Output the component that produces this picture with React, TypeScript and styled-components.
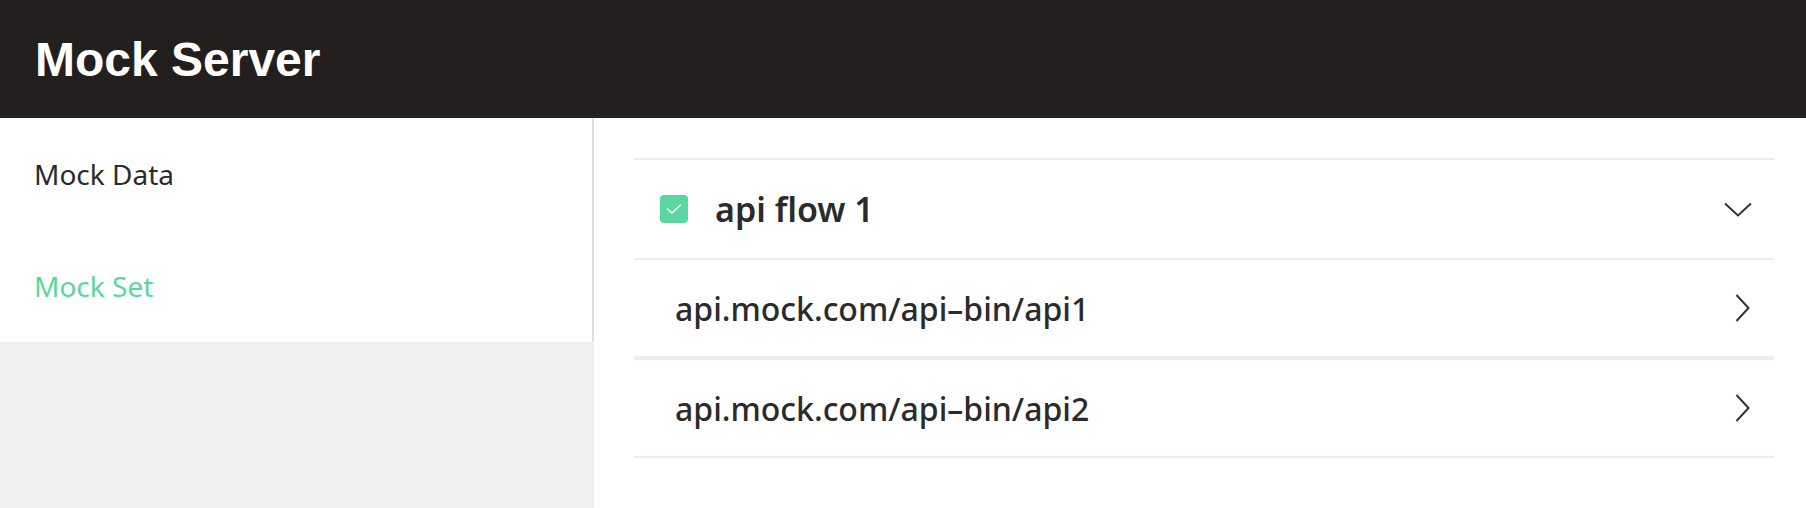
import React from "react";
import styled, { createGlobalStyle } from "styled-components";

const GlobalStyle = createGlobalStyle`
  html, body { margin: 0; padding: 0; background: #ffffff; }
  body { font-family: "Noto Sans", "Liberation Sans", sans-serif; color: #333333; }
  * { box-sizing: border-box; }
`;

const Page = styled.div`
  display: flex;
  flex-direction: column;
  width: 1806px;
  height: 508px;
  overflow: hidden;
`;

const TopBar = styled.header`
  display: flex;
  align-items: center;
  height: 118px;
  padding-left: 35px;
  background: #231f1e;
  flex-shrink: 0;
`;

const Title = styled.h1`
  margin: 0;
  font-family: "Liberation Sans", Arial, sans-serif;
  font-weight: 700;
  font-size: 48px;
  color: #ffffff;
`;

const Body = styled.div`
  display: flex;
  flex: 1;
  min-height: 0;
`;

const Sidebar = styled.aside`
  width: 594px;
  flex-shrink: 0;
  background: #f0f0f0;
`;

const Menu = styled.nav`
  display: flex;
  flex-direction: column;
  background: #ffffff;
  border-right: 2px solid #dedede;
`;

const MenuItem = styled.div<{ $active?: boolean }>`
  display: flex;
  align-items: center;
  height: 112px;
  padding-left: 34px;
  font-size: 28px;
  color: ${(p) => (p.$active ? "#5ad7a1" : "#2b2b2b")};
`;

const Content = styled.main`
  flex: 1;
  padding: 40px 32px 0 40px;
`;

const GroupHeader = styled.div`
  display: flex;
  align-items: center;
  height: 100px;
  padding: 0 22px 0 26px;
  border-top: 2px solid #eaedf3;
`;

const Check = styled.span`
  display: flex;
  align-items: center;
  justify-content: center;
  width: 28px;
  height: 28px;
  border-radius: 4px;
  background: #5ad7a1;
  flex-shrink: 0;
`;

const GroupTitle = styled.span`
  flex: 1;
  margin-left: 27px;
  font-size: 34px;
  font-weight: 600;
  color: #2b2b2b;
`;

const ApiRow = styled.div`
  display: flex;
  align-items: center;
  height: 100px;
  padding: 0 24px 0 41px;
  border-top: 2px solid #eaedf3;
  border-bottom: 2px solid #eaedf3;
`;

const ApiText = styled.span`
  flex: 1;
  font-size: 32px;
  font-weight: 500;
  color: #2b2b2b;
`;

const Chevron = styled.svg`
  display: block;
  flex-shrink: 0;
`;

const apis = ["api.mock.com/api\u2013bin/api1", "api.mock.com/api\u2013bin/api2"];

export default function App() {
  return (
    <Page>
      <GlobalStyle />
      <TopBar>
        <Title>Mock Server</Title>
      </TopBar>
      <Body>
        <Sidebar>
          <Menu>
            <MenuItem>Mock Data</MenuItem>
            <MenuItem $active>Mock Set</MenuItem>
          </Menu>
        </Sidebar>
        <Content>
          <GroupHeader>
            <Check>
              <svg width="18" height="14" viewBox="0 0 18 14">
                <polyline points="2.5,7 7,11 15.5,3" fill="none" stroke="#ffffff" strokeWidth="1.6" strokeLinecap="round" strokeLinejoin="round" />
              </svg>
            </Check>
            <GroupTitle>api flow 1</GroupTitle>
            <Chevron width="28" height="15" viewBox="0 0 28 15">
              <polyline points="1,1.5 14,13.5 27,1.5" fill="none" stroke="#333333" strokeWidth="2" />
            </Chevron>
          </GroupHeader>
          {apis.map((a) => (
            <ApiRow key={a}>
              <ApiText>{a}</ApiText>
              <Chevron width="15" height="28" viewBox="0 0 15 28">
                <polyline points="1.5,1 13.5,14 1.5,27" fill="none" stroke="#333333" strokeWidth="2" />
              </Chevron>
            </ApiRow>
          ))}
        </Content>
      </Body>
    </Page>
  );
}
